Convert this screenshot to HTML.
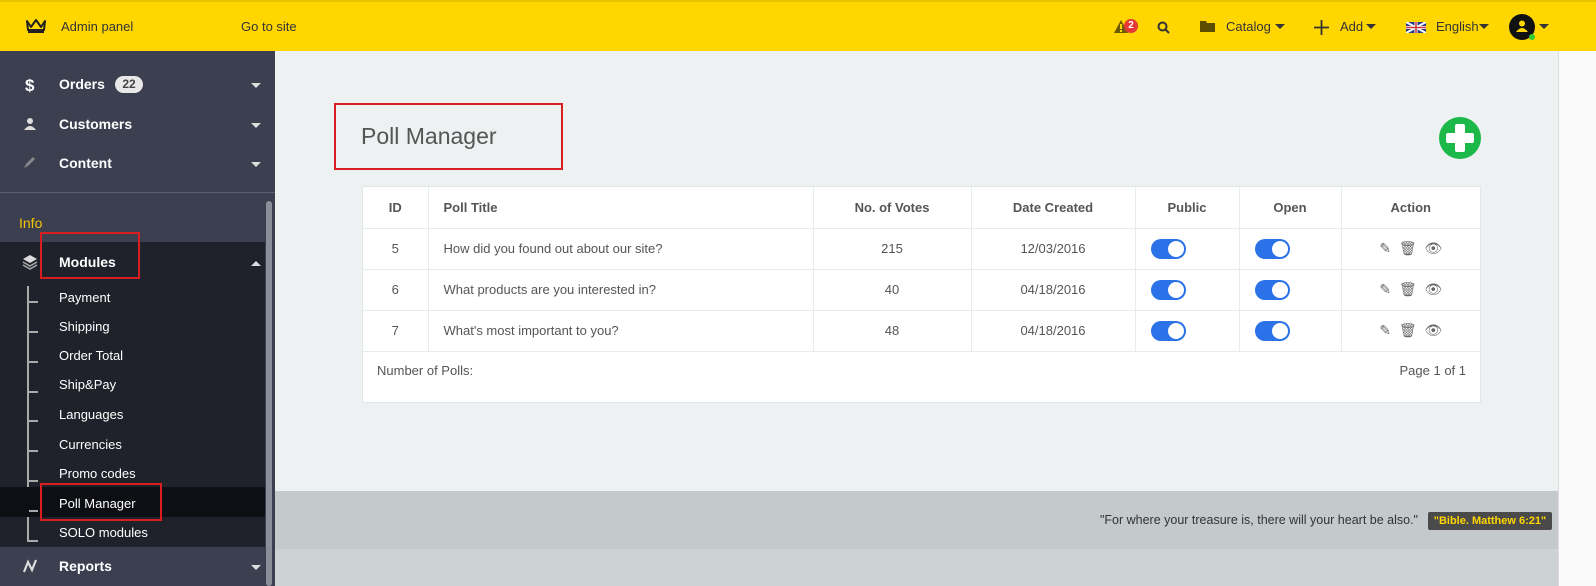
<!DOCTYPE html>
<html><head><meta charset="utf-8"><style>
*{box-sizing:border-box;margin:0;padding:0}
body{width:1596px;height:586px;overflow:hidden;background:#eef1f2;font-family:"Liberation Sans",sans-serif;position:relative;font-size:13px;color:#555}
.a{position:absolute}
#top{left:0;top:0;width:1596px;height:51px;background:#ffd600;border-top:2px solid #e8c300}
#top .t{position:absolute;top:17px;font-size:13px;color:#333}
#side{left:0;top:51px;width:275px;height:535px;background:#3b3f50}
.mi{position:absolute;left:0;width:275px;color:#fff;font-weight:bold;font-size:14px}
.mi .lbl{position:absolute;left:59px}
.car{position:absolute;left:251px;width:0;height:0;border-left:5px solid transparent;border-right:5px solid transparent;border-top:5px solid #ddd}
.sub{position:absolute;left:59px;color:#fff;font-size:13px}
.tick{position:absolute;left:29px;width:9px;height:2px;background:#aaa}
table{border-collapse:collapse;width:100%;font-size:13px}
td,th{border-right:1px solid #e8ebed;border-bottom:1px solid #e8ebed;text-align:center;color:#555}
th{font-weight:bold;color:#555;height:41px}
td{height:41px}
.tg{display:inline-block;width:35px;height:20px;border-radius:10px;background:#2b72e8;position:relative;vertical-align:middle}
.tg:after{content:"";position:absolute;right:2px;top:2px;width:16px;height:16px;border-radius:50%;background:#fff}
.red{position:absolute;border:2px solid #d81e1e}
.ic{color:#666;font-size:14px}
</style></head><body>
<div id="top" class="a">
 <svg class="a" style="left:25px;top:16px" width="22" height="16" viewBox="0 0 22 16"><path d="M2 3 L6 9 L11 2 L16 9 L20 3 L19 12 L3 12 Z" fill="none" stroke="#222" stroke-width="2" stroke-linejoin="round"/><rect x="3" y="13" width="16" height="2" fill="#222"/></svg>
 <div class="t" style="left:61px">Admin panel</div>
 <div class="t" style="left:241px">Go to site</div>
 <svg class="a" style="left:1114px;top:18px" width="14" height="13"><path d="M7 0 L14 13 L0 13Z" fill="#6b5a00"/><rect x="6" y="4" width="2" height="5" fill="#ffd600"/><rect x="6" y="10" width="2" height="2" fill="#ffd600"/></svg>
 <div class="a" style="left:1124px;top:17px;width:14px;height:14px;border-radius:7px;background:#e53935;color:#fff;font-size:10px;font-weight:bold;text-align:center;line-height:14px">2</div>
 <svg class="a" style="left:1157px;top:19px" width="13" height="13"><circle cx="5.5" cy="5.5" r="4" fill="none" stroke="#333" stroke-width="2"/><path d="M8.5 8.5 L12 12" stroke="#333" stroke-width="2"/></svg>
 <svg class="a" style="left:1200px;top:18px" width="15" height="12"><path d="M0 1 H6 L7 3 H15 V12 H0Z" fill="#5c4d00"/></svg>
 <div class="t" style="left:1226px">Catalog</div><div class="car" style="left:1275px;top:22px;border-top-color:#333"></div>
 <svg class="a" style="left:1314px;top:18px" width="15" height="15"><path d="M7.5 0V15M0 7.5H15" stroke="#333" stroke-width="1.8"/></svg>
 <div class="t" style="left:1340px">Add</div><div class="car" style="left:1366px;top:22px;border-top-color:#333"></div>
 <svg class="a" style="left:1406px;top:20px" width="20" height="11"><rect width="20" height="11" fill="#2a3a8a"/><path d="M0 0L20 11M20 0L0 11" stroke="#fff" stroke-width="2"/><path d="M10 0V11M0 5.5H20" stroke="#fff" stroke-width="3"/><path d="M10 0V11M0 5.5H20" stroke="#c33" stroke-width="1.5"/></svg>
 <div class="t" style="left:1436px">English</div><div class="car" style="left:1479px;top:22px;border-top-color:#333"></div>
 <div class="a" style="left:1509px;top:12px;width:26px;height:26px;border-radius:13px;background:#111"></div>
 <svg class="a" style="left:1515px;top:17px" width="14" height="14"><circle cx="7" cy="4.5" r="3" fill="#ffd600"/><path d="M1 13 Q7 5 13 13Z" fill="#ffd600"/></svg>
 <div class="a" style="left:1529px;top:32px;width:6px;height:6px;border-radius:3px;background:#3c3"></div>
 <div class="car" style="left:1539px;top:22px;border-top-color:#333"></div>
</div>
<div id="side" class="a">
 <div class="mi" style="top:25px;height:20px"><span class="a" style="left:25px;font-size:17px">$</span><span class="lbl">Orders</span><span class="a" style="left:115px;top:0;width:28px;height:17px;background:#e8e8e8;border-radius:9px;color:#444;font-size:12px;text-align:center;line-height:17px">22</span><div class="car" style="top:7px"></div></div>
 <div class="mi" style="top:65px;height:20px"><svg class="a" style="left:22px;top:2px" width="16" height="12"><circle cx="8" cy="3" r="3" fill="#ddd"/><path d="M2 12Q8 4 14 12Z" fill="#ddd"/></svg><span class="lbl">Customers</span><div class="car" style="top:7px"></div></div>
 <div class="mi" style="top:104px;height:20px"><svg class="a" style="left:23px;top:0" width="14" height="14"><path d="M1 13L3 9L10 2L12 4L5 11Z" fill="#888"/></svg><span class="lbl">Content</span><div class="car" style="top:7px"></div></div>
 <div class="a" style="left:0;top:141px;width:275px;height:1px;background:#5a5f70"></div>
 <div class="a" style="left:19px;top:164px;color:#f5c400;font-size:14px">Info</div>
 <div class="a" style="left:0;top:191px;width:265px;height:305px;background:#1f212b"></div>
 <div class="mi" style="top:203px;height:20px"><svg class="a" style="left:22px;top:0" width="16" height="16"><path d="M8 1L15 5L8 9L1 5Z" fill="#ddd"/><path d="M1 8L8 12L15 8M1 11L8 15L15 11" fill="none" stroke="#aaa" stroke-width="1.5"/></svg><span class="lbl">Modules</span><div class="car" style="top:7px;border-top:none;border-bottom:5px solid #ddd"></div></div>
 <div class="a" style="left:27px;top:235px;width:2px;height:256px;background:#aaa"></div>
 <div class="a" style="left:0;top:436px;width:265px;height:30px;background:#0e0f14"></div>
 <div class="tick" style="top:250px"></div><div class="sub" style="top:239px">Payment</div>
 <div class="tick" style="top:280px"></div><div class="sub" style="top:268px">Shipping</div>
 <div class="tick" style="top:310px"></div><div class="sub" style="top:297px">Order Total</div>
 <div class="tick" style="top:340px"></div><div class="sub" style="top:326px">Ship&amp;Pay</div>
 <div class="tick" style="top:369px"></div><div class="sub" style="top:356px">Languages</div>
 <div class="tick" style="top:399px"></div><div class="sub" style="top:386px">Currencies</div>
 <div class="tick" style="top:429px"></div><div class="sub" style="top:415px">Promo codes</div>
 <div class="tick" style="top:459px"></div><div class="sub" style="top:445px">Poll Manager</div>
 <div class="tick" style="top:489px"></div><div class="sub" style="top:474px">SOLO modules</div>
 <div class="mi" style="top:507px;height:20px"><svg class="a" style="left:22px;top:0" width="16" height="16"><path d="M2 14L6 4L10 12L14 2" fill="none" stroke="#ddd" stroke-width="2.2"/></svg><span class="lbl">Reports</span><div class="car" style="top:7px"></div></div>
 <div class="a" style="left:266px;top:150px;width:6px;height:385px;background:#8a8e98;border-radius:3px"></div>
</div>
<div class="red" style="left:40px;top:232px;width:100px;height:47px"></div>
<div class="red" style="left:40px;top:483px;width:122px;height:38px"></div>
<div class="a" style="left:275px;top:491px;width:1283px;height:58px;background:#c4c9cc"></div>
<div class="a" style="left:275px;top:549px;width:1283px;height:37px;background:#cdd2d5"></div>
<div class="a" style="left:1558px;top:51px;width:38px;height:535px;background:#fafafa;border-left:1px solid #ddd"></div>
<div class="a" style="right:178px;top:513px;font-size:12.5px;color:#333;white-space:nowrap">"For where your treasure is, there will your heart be also."</div>
<div class="a" style="left:1428px;top:512px;width:124px;height:18px;background:#4a4a4a;border-radius:2px;color:#ffd600;font-size:11px;font-weight:bold;text-align:center;line-height:18px">"Bible. Matthew 6:21"</div>
<div class="red" style="left:334px;top:103px;width:229px;height:67px"></div>
<div class="a" style="left:361px;top:123px;font-size:23px;color:#555">Poll Manager</div>
<div class="a" style="left:1439px;top:117px;width:42px;height:42px;border-radius:21px;background:#1cb84a"></div>
<div class="a" style="left:1455px;top:124px;width:10px;height:28px;background:#fff;border-radius:2px"></div>
<div class="a" style="left:1446px;top:133px;width:28px;height:10px;background:#fff;border-radius:2px"></div>
<div class="a" style="left:362px;top:186px;width:1119px;height:217px;background:#fff;border:1px solid #e3e6e8">
<table>
<tr><th style="width:65px">ID</th><th style="width:385px;text-align:left;padding-left:15px">Poll Title</th><th style="width:158px">No. of Votes</th><th style="width:164px">Date Created</th><th style="width:104px">Public</th><th style="width:102px">Open</th><th style="border-right:none">Action</th></tr>
<tr><td>5</td><td style="text-align:left;padding-left:15px">How did you found out about our site?</td><td>215</td><td>12/03/2016</td><td style="text-align:left;padding-left:15px"><span class="tg"></span></td><td style="text-align:left;padding-left:15px"><span class="tg"></span></td><td class="ic" style="border-right:none">✎ &nbsp;🗑 &nbsp;👁</td></tr>
<tr><td>6</td><td style="text-align:left;padding-left:15px">What products are you interested in?</td><td>40</td><td>04/18/2016</td><td style="text-align:left;padding-left:15px"><span class="tg"></span></td><td style="text-align:left;padding-left:15px"><span class="tg"></span></td><td class="ic" style="border-right:none">✎ &nbsp;🗑 &nbsp;👁</td></tr>
<tr><td>7</td><td style="text-align:left;padding-left:15px">What's most important to you?</td><td>48</td><td>04/18/2016</td><td style="text-align:left;padding-left:15px"><span class="tg"></span></td><td style="text-align:left;padding-left:15px"><span class="tg"></span></td><td class="ic" style="border-right:none">✎ &nbsp;🗑 &nbsp;👁</td></tr>
</table>
<div class="a" style="left:14px;top:176px">Number of Polls:</div>
<div class="a" style="right:14px;top:176px">Page 1 of 1</div>
</div>
</body></html>
